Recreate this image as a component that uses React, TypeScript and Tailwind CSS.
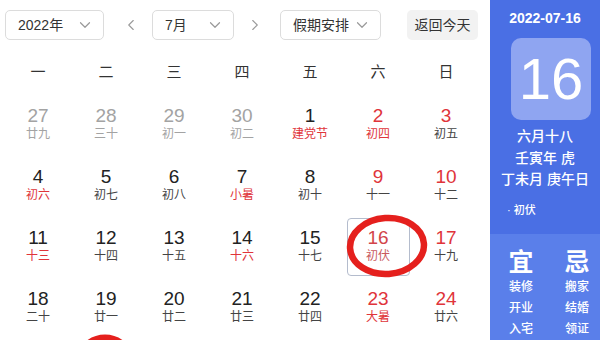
import React from "react";
import { ChevronDown, ChevronLeft, ChevronRight } from "lucide-react";

type Day = { n: number; l: string; nc: string; lc: string; sel?: boolean };

const G = "text-[#a3a3a3]";
const D = "text-[#222222]";
const R = "text-[#e0343a]";
const LD = "text-[#444444]";

const rows: Day[][] = [
  [
    { n: 27, l: "廿九", nc: G, lc: G },
    { n: 28, l: "三十", nc: G, lc: G },
    { n: 29, l: "初一", nc: G, lc: G },
    { n: 30, l: "初二", nc: G, lc: G },
    { n: 1, l: "建党节", nc: D, lc: R },
    { n: 2, l: "初四", nc: R, lc: R },
    { n: 3, l: "初五", nc: R, lc: LD },
  ],
  [
    { n: 4, l: "初六", nc: D, lc: R },
    { n: 5, l: "初七", nc: D, lc: LD },
    { n: 6, l: "初八", nc: D, lc: LD },
    { n: 7, l: "小暑", nc: D, lc: R },
    { n: 8, l: "初十", nc: D, lc: LD },
    { n: 9, l: "十一", nc: R, lc: LD },
    { n: 10, l: "十二", nc: R, lc: LD },
  ],
  [
    { n: 11, l: "十三", nc: D, lc: R },
    { n: 12, l: "十四", nc: D, lc: LD },
    { n: 13, l: "十五", nc: D, lc: LD },
    { n: 14, l: "十六", nc: D, lc: R },
    { n: 15, l: "十七", nc: D, lc: LD },
    { n: 16, l: "初伏", nc: "text-[#d2454a]", lc: "text-[#c95a5e]", sel: true },
    { n: 17, l: "十九", nc: R, lc: LD },
  ],
  [
    { n: 18, l: "二十", nc: D, lc: LD },
    { n: 19, l: "廿一", nc: D, lc: LD },
    { n: 20, l: "廿二", nc: D, lc: LD },
    { n: 21, l: "廿三", nc: D, lc: LD },
    { n: 22, l: "廿四", nc: D, lc: LD },
    { n: 23, l: "大暑", nc: R, lc: R },
    { n: 24, l: "廿六", nc: R, lc: LD },
  ],
];

const weeks = ["一", "二", "三", "四", "五", "六", "日"];

function Select({ label, w }: { label: string; w: string }) {
  return (
    <div
      className={`${w} h-[30px] flex items-center justify-between pl-[12px] pr-[9px] border border-[#dcdcdc] rounded-[5px] bg-white text-[14px] text-[#333]`}
    >
      <span>{label}</span>
      <ChevronDown size={18} strokeWidth={1.6} className="text-[#9a9a9a]" />
    </div>
  );
}

export default function App() {
  return (
    <div
      className="w-[600px] h-[340px] flex bg-white overflow-hidden"
      style={{ fontFamily: '"Liberation Sans", "Noto Sans CJK SC", sans-serif' }}
    >
      <div className="relative w-[490px] h-full">
        <div className="h-[50px] flex items-center pl-[5px]">
          <Select label="2022年" w="w-[99px]" />
          <ChevronLeft size={18} strokeWidth={1.5} className="ml-[18px] text-[#9a9a9a]" />
          <div className="ml-[12px]">
            <Select label="7月" w="w-[82px]" />
          </div>
          <ChevronRight size={18} strokeWidth={1.5} className="ml-[12px] text-[#9a9a9a]" />
          <div className="ml-[16px]">
            <Select label="假期安排" w="w-[101px]" />
          </div>
          <div className="ml-[26px] w-[71px] h-[30px] flex items-center justify-center rounded-[5px] bg-[#f2f2f2] text-[14px] text-[#333]">
            返回今天
          </div>
        </div>
        <div className="pl-[4px]">
          <div className="grid grid-cols-[repeat(7,68px)] h-[44px] items-center">
            {weeks.map((w) => (
              <div key={w} className="text-center text-[15px] text-[#333]">
                {w}
              </div>
            ))}
          </div>
          {rows.map((r, i) => (
            <div key={i} className="grid grid-cols-[repeat(7,68px)] h-[61px]">
              {r.map((d) => (
                <div key={d.n + "-" + i} className="flex items-center justify-center">
                  <div
                    className={`flex flex-col items-center justify-center pb-[2px] ${
                      d.sel
                        ? "w-[63px] h-[58px] border border-[#b4bccd] rounded-[4px]"
                        : "w-[63px] h-[58px]"
                    }`}
                  >
                    <div className={`text-[19px] leading-[21px] ${d.nc}`}>{d.n}</div>
                    <div className={`text-[12px] leading-[17px] ${d.lc}`}>{d.l}</div>
                  </div>
                </div>
              ))}
            </div>
          ))}
        </div>
        <svg className="absolute left-0 top-0 pointer-events-none" width="490" height="340">
          <ellipse
            cx="387"
            cy="246"
            rx="37"
            ry="28"
            fill="none"
            stroke="#e5201d"
            strokeWidth="6.5"
            transform="rotate(-4 387 246)"
          />
          <ellipse cx="105" cy="368" rx="28" ry="30" fill="none" stroke="#e5201d" strokeWidth="7" />
        </svg>
      </div>
      <div className="w-[110px] h-full flex flex-col text-white">
        <div className="h-[234px] bg-[#4a6fe4] flex flex-col">
          <div className="h-[27px] flex items-end justify-center text-[14px] font-bold leading-[17px]">
            2022-07-16
          </div>
          <div className="ml-[21px] mt-[11px] w-[80px] h-[82px] rounded-[10px] bg-[#8fa5f1] flex items-center justify-center text-[58px] leading-none">
            16
          </div>
          <div className="mt-[6px] flex flex-col items-center text-[14px] leading-[21.5px] font-medium">
            <div>六月十八</div>
            <div>壬寅年 虎</div>
            <div>丁未月 庚午日</div>
          </div>
          <div className="mt-[12px] pl-[17px] text-[11px] leading-[14px] font-medium">· 初伏</div>
        </div>
        <div className="flex-1 bg-[#5a7fea] flex pt-[13px] font-medium">
          <div className="ml-[8px] w-[50px] flex flex-col items-center">
            <div className="text-[25px] font-bold leading-[30px]">宜</div>
            <div className="text-[12px] leading-[21px]">装修</div>
            <div className="text-[12px] leading-[21px]">开业</div>
            <div className="text-[12px] leading-[21px]">入宅</div>
          </div>
          <div className="ml-[10px] w-[50px] flex flex-col items-center">
            <div className="text-[25px] font-bold leading-[30px]">忌</div>
            <div className="text-[12px] leading-[21px]">搬家</div>
            <div className="text-[12px] leading-[21px]">结婚</div>
            <div className="text-[12px] leading-[21px]">领证</div>
          </div>
        </div>
      </div>
    </div>
  );
}
